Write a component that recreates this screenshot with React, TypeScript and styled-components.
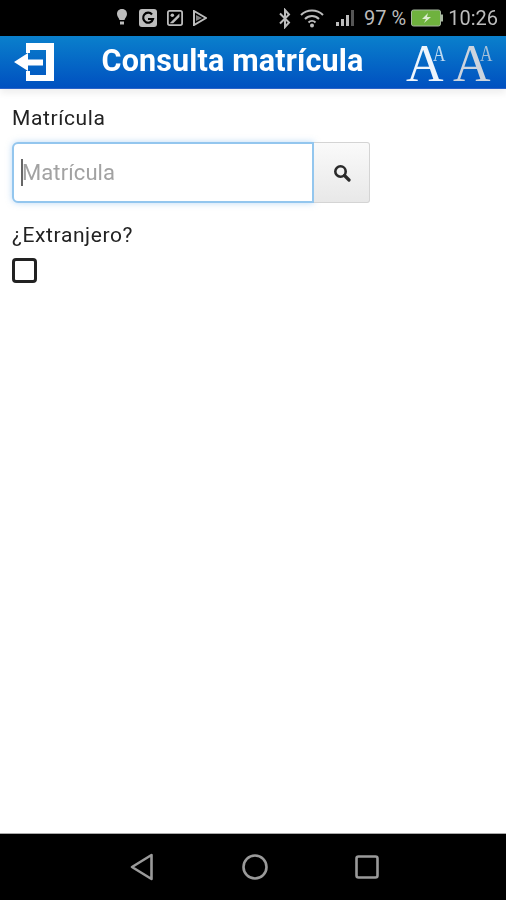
import * as React from "react"
import styled, { createGlobalStyle } from "styled-components"

const GlobalStyle = createGlobalStyle`
    html, body {
        margin: 0;
        padding: 0;
        background: #fff;
    }
    body {
        font-family: Roboto, "Liberation Sans", sans-serif;
    }
    * {
        box-sizing: border-box;
    }
`

const Screen = styled.div`
    width: 506px;
    height: 900px;
    display: flex;
    flex-direction: column;
    overflow: hidden;
    filter: blur(0.6px);
`

const StatusBar = styled.div`
    height: 36px;
    flex: none;
    background: #000;
    display: flex;
    align-items: center;
    justify-content: space-between;
    padding: 0 8px 0 115px;
    color: #bcbcbc;
`

const StatusGroup = styled.div`
    display: flex;
    align-items: center;
    gap: ${(props: { gap: number }) => props.gap}px;
`

const StatusText = styled.span`
    font-size: 20px;
    line-height: 36px;
    white-space: nowrap;
`

const Header = styled.header`
    height: 53px;
    flex: none;
    background: linear-gradient(#0a80cc, #0050c0);
    border-bottom: 1px solid #2a62c8;
    display: flex;
    align-items: center;
    padding: 0 6px 0 13px;
    box-shadow: 0 4px 7px rgba(0, 0, 0, 0.07);
`

const Title = styled.h1`
    flex: 1;
    margin: 0 0 4px;
    padding-left: 4px;
    text-align: center;
    font-size: 30.5px;
    font-weight: 700;
    letter-spacing: 0.15px;
    color: #fff;
    white-space: nowrap;
`

const FontButton = styled.span`
    position: relative;
    display: block;
    width: 47px;
    height: 44px;
    font-family: "Liberation Serif", serif;
    color: ${(props: { dim?: boolean }) => props.dim ? "#ccd4de" : "#eef5fc"};
`

const BigA = styled.span`
    position: absolute;
    left: 0;
    bottom: -6px;
    font-size: 52px;
    line-height: 52px;
`

const SmallA = styled.span`
    position: absolute;
    left: 27px;
    top: 1px;
    font-size: 24px;
    line-height: 24px;
    transform: scaleX(0.72);
    transform-origin: left top;
    opacity: 0.8;
`

const Content = styled.main`
    flex: 1;
    padding: 16px 12px 0;
    display: flex;
    flex-direction: column;
    align-items: flex-start;
`

const Label = styled.label`
    font-size: 21px;
    line-height: 26px;
    letter-spacing: 0.6px;
    color: #222;
`

const InputGroup = styled.div`
    display: flex;
    margin-top: 11px;
    margin-bottom: 19px;
    height: 61px;
`

const Field = styled.div`
    width: 302px;
    border: 2px solid #93c6ee;
    border-radius: 6px 0 0 6px;
    box-shadow: 0 0 6px rgba(120, 180, 235, 0.5);
    display: flex;
    align-items: center;
    padding-left: 7px;
    font-size: 22px;
    letter-spacing: 0.1px;
    color: #a2a2a2;
    background: #fff;
`

const Caret = styled.span`
    width: 2px;
    height: 27px;
    margin-right: -1px;
    background: #666;
`

const SearchButton = styled.div`
    width: 56px;
    background: linear-gradient(#fafafa, #e8e8e8);
    border: 1px solid #d4d4d4;
    border-left: none;
    border-radius: 0 3px 3px 0;
    display: flex;
    align-items: center;
    justify-content: center;
`

const Checkbox = styled.span`
    display: block;
    width: 25px;
    height: 25px;
    margin-top: 10px;
    border: 3px solid #222;
    border-radius: 4px;
    background: #fff;
`

const NavBar = styled.nav`
    height: 67px;
    flex: none;
    background: #000;
    border-top: 1px solid #aaa;
    display: flex;
    align-items: center;
    justify-content: center;
    gap: 87.5px;
    padding-left: 3px;
`

const App = () => {
    return (
        <Screen>
            <GlobalStyle />
            <StatusBar>
                <StatusGroup gap={10}>
                    <svg width="14" height="20" viewBox="0 0 14 20">
                        <path d="M7 1 C3.5 1 2 3.5 2 6 C2 8.5 4 10 4.5 12 H9.500 C10 10 12 8.500 12 6 C12 3.500 10.500 1 7 1 Z" fill="#bcbcbc" />
                        <rect x="5" y="13.500" width="4" height="3" fill="#bcbcbc" />
                    </svg>
                    <svg width="18" height="18" viewBox="0 0 18 18">
                        <rect width="18" height="18" rx="3" fill="#bcbcbc" />
                        <path d="M13 5.500 A5 5 0 1 0 14 10 H9" fill="none" stroke="#000" strokeWidth="2.200" />
                    </svg>
                    <svg width="16" height="16" viewBox="0 0 18 18">
                        <rect x="1" y="1" width="16" height="16" rx="2" fill="none" stroke="#bcbcbc" strokeWidth="2" />
                        <circle cx="6" cy="6" r="2" fill="#bcbcbc" />
                        <path d="M3 15 L14 4 V8 L7 15 Z" fill="#bcbcbc" />
                    </svg>
                    <svg width="14" height="16" viewBox="0 0 14 16">
                        <path d="M1 1 L13 8 L1 15 Z" fill="none" stroke="#bcbcbc" strokeWidth="2" />
                        <path d="M3 5 L9 8 L3 11 Z" fill="#808080" />
                    </svg>
                </StatusGroup>
                <StatusGroup gap={7}>
                    <svg width="14" height="21" viewBox="0 0 14 21" style={{ marginRight: 1 }}>
                        <path d="M2 5.500 L11 14.500 L7 19 V2 L11 6.500 L2 15.500" fill="none" stroke="#bcbcbc" strokeWidth="2" />
                    </svg>
                    <svg width="24" height="20" viewBox="0 0 24 20">
                        <path d="M1 7 C7 1 17 1 23 7 M5 11 C9 7 15 7 19 11 M8.500 14.500 C10.500 12.500 13.500 12.500 15.500 14.500" fill="none" stroke="#bcbcbc" strokeWidth="2" />
                        <circle cx="12" cy="17.500" r="2" fill="#bcbcbc" />
                    </svg>
                    <svg width="20" height="18" viewBox="0 0 20 18" style={{ marginLeft: 5, marginRight: 1 }}>
                        <rect x="0" y="13" width="3" height="4" fill="#bcbcbc" />
                        <rect x="5" y="10" width="3" height="7" fill="#bcbcbc" />
                        <rect x="10" y="6" width="3" height="11" fill="#bcbcbc" />
                        <rect x="15" y="1" width="3" height="16" fill="#555" />
                    </svg>
                    <StatusText>97 %</StatusText>
                    <svg width="32" height="18" viewBox="0 0 32 18" style={{ marginLeft: -2, marginRight: -2 }}>
                        <rect x="0.500" y="1" width="29" height="16" rx="2" fill="#6fb23e" stroke="#a8b8a0" />
                        <rect x="30" y="5.500" width="2" height="7" fill="#a8b8a0" />
                        <path d="M17 4 L11 10 H15 L13 14 L20 8 H16 Z" fill="#dcecd0" />
                    </svg>
                    <StatusText>10:26</StatusText>
                </StatusGroup>
            </StatusBar>
            <Header>
                <svg width="42" height="42" viewBox="0 0 42 42">
                    <path d="M13 2 H41 V40 H13 V30 H17 V34 H33 V9 H17 V12 H13 Z" fill="#fff" />
                    <path d="M1 21 L15 12 V18.500 H30 V24.500 H15 V30 Z" fill="#fff" />
                </svg>
                <Title>Consulta matrícula</Title>
                <FontButton>
                    <BigA>A</BigA>
                    <SmallA>A</SmallA>
                </FontButton>
                <FontButton dim>
                    <BigA>A</BigA>
                    <SmallA>A</SmallA>
                </FontButton>
            </Header>
            <Content>
                <Label>Matrícula</Label>
                <InputGroup>
                    <Field>
                        <Caret />
                        Matrícula
                    </Field>
                    <SearchButton>
                        <svg width="18" height="18" viewBox="0 0 18 18">
                            <circle cx="7.500" cy="7.500" r="5.200" fill="none" stroke="#2a2a2a" strokeWidth="2.600" />
                            <path d="M11.500 11.500 L16 16" stroke="#2a2a2a" strokeWidth="3.200" strokeLinecap="round" />
                        </svg>
                    </SearchButton>
                </InputGroup>
                <Label>¿Extranjero?</Label>
                <Checkbox />
            </Content>
            <NavBar>
                <svg width="24" height="28" viewBox="0 0 24 28">
                    <path d="M21.500 2 V26 L2 14 Z" fill="none" stroke="#9a9a9a" strokeWidth="2.600" strokeLinejoin="round" />
                </svg>
                <svg width="26" height="26" viewBox="0 0 26 26">
                    <circle cx="13" cy="13" r="11.500" fill="none" stroke="#9a9a9a" strokeWidth="2.600" />
                </svg>
                <svg width="24" height="24" viewBox="0 0 24 24">
                    <rect x="1.500" y="1.500" width="21" height="21" rx="2" fill="none" stroke="#9a9a9a" strokeWidth="2.600" />
                </svg>
            </NavBar>
        </Screen>
    )
}

export default App
